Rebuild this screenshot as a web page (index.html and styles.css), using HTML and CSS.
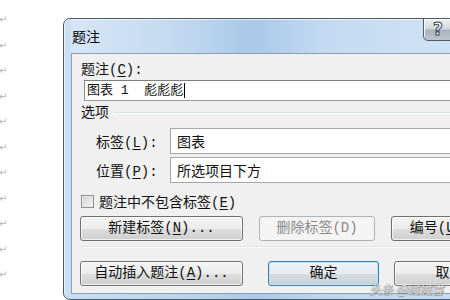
FILE: index.html
```
<!DOCTYPE html>
<html lang="zh-CN">
<head>
  <meta charset="UTF-8">
  <title>题注</title>
  <link rel="stylesheet" href="styles.css">
</head>
<body>
  <div class="page">
    <div class="marks">
      <span>↵</span><span>↵</span><span>↵</span><span>↵</span><span>↵</span><span>↵</span>
      <span>↵</span><span>↵</span><span>↵</span><span>↵</span><span>↵</span>
    </div>

    <div class="dialog">
      <div class="titlebar">
        <span class="title">题注</span>
      </div>
      <div class="help">?</div>

      <div class="client">
        <div class="label">题注(<u>C</u>):</div>
        <div class="caption-input">图表 1  彪彪彪<span class="caret"></span></div>

        <div class="group">
          <span>选项</span>
          <span class="group-line"></span>
        </div>

        <div class="field">
          <span class="field-label">标签(<u>L</u>):</span>
          <div class="combo">图表</div>
        </div>
        <div class="field">
          <span class="field-label">位置(<u>P</u>):</span>
          <div class="combo">所选项目下方</div>
        </div>

        <div class="check">
          <span class="box"></span>
          <span>题注中不包含标签(<u>E</u>)</span>
        </div>

        <div class="btn-row">
          <button class="btn btn-wide">新建标签(<u>N</u>)...</button>
          <button class="btn btn-mid" disabled>删除标签(D)</button>
          <button class="btn btn-mid">编号(<u>U</u>)...</button>
        </div>
        <div class="sep"></div>
        <div class="btn-row btn-row-bottom">
          <button class="btn btn-wide">自动插入题注(<u>A</u>)...</button>
          <button class="btn btn-small btn-default">确定</button>
          <button class="btn btn-small">取消</button>
        </div>
      </div>
    </div>
  </div>

  <div class="watermark">头条 @缄缄書</div>
</body>
</html>
```

FILE: styles.css
```
body {
  margin: 0;
  width: 450px;
  height: 300px;
  overflow: hidden;
  background-color: #fff;
  font-family: "Liberation Mono", "Noto Sans CJK SC", monospace;
  font-size: 14px;
  color: #111;
  position: relative;
}

.page {
  display: flex;
}

/* paragraph marks of the document behind the dialog */
.marks {
  width: 63px;
  flex-shrink: 0;
  padding-top: 12px;
  display: flex;
  flex-direction: column;
}

.marks span {
  height: 25.5px;
  line-height: 16px;
  font-family: "DejaVu Sans", sans-serif;
  font-size: 10px;
  color: #b5b5b5;
  margin-left: -1px;
}

.dialog {
  position: relative;
  margin-top: 18px;
  width: 430px;
  height: 282px;
  box-sizing: border-box;
  border: 1px solid #4b5866;
  border-radius: 7px 7px 0 7px;
  padding: 0 7px 5px 7px;
  background: linear-gradient(to right, #c9dff3 0%, #b9d4ee 30%, #a9c8e8 45%, #bdd7f0 60%, #c8def3 100%);
  box-shadow: inset 1px 1px 0 rgba(255, 255, 255, 0.6);
}

.titlebar {
  height: 34px;
  display: flex;
  align-items: center;
  background: linear-gradient(to right, rgba(255, 255, 255, 0.25), rgba(255, 255, 255, 0) 40%, rgba(255, 255, 255, 0.15) 80%);
}

.title {
  font-family: "Noto Sans CJK SC", sans-serif;
  font-size: 14px;
  color: #000;
  margin-left: 1px;
}

.help {
  position: absolute;
  left: 359px;
  top: -1px;
  width: 30px;
  height: 23px;
  box-sizing: border-box;
  border: 1px solid #4d5a68;
  border-radius: 0 0 0 5px;
  background: linear-gradient(#eef1f4 0%, #d3d9df 45%, #aab3bd 55%, #bcc4cc 100%);
  box-shadow: inset 1px 1px 0 rgba(255, 255, 255, 0.8);
  text-align: center;
  font-family: "DejaVu Sans", sans-serif;
  font-weight: bold;
  font-size: 17px;
  line-height: 21px;
  color: #fff;
  -webkit-text-stroke: 1px #3e4650;
}

.client {
  height: 241px;
  box-sizing: border-box;
  border: 1px solid #8a9fb4;
  background-color: #f0f0f0;
  padding-left: 9px;
}

u {
  text-decoration: underline;
  text-underline-offset: 2px;
}

.label {
  margin-top: 7px;
  line-height: 18px;
}

.caption-input {
  margin-top: 1px;
  margin-left: 3px;
  height: 21px;
  box-sizing: border-box;
  border: 1px solid;
  border-color: #7f7f7f #b5b5b5 #9a9a9a #8a8a8a;
  background-color: #fff;
  font-size: 13px;
  line-height: 19px;
  padding-left: 2px;
  white-space: pre;
  display: flex;
  align-items: center;
}

.caret {
  display: inline-block;
  width: 1px;
  height: 15px;
  background-color: #000;
  margin-left: 1px;
}

.group {
  margin-top: 3px;
  display: flex;
  align-items: center;
  line-height: 18px;
}

.group-line {
  flex: 1;
  margin-left: 5px;
  border-top: 1px solid #d5dfe5;
  border-bottom: 1px solid #fff;
}

.field {
  margin-top: 6px;
  display: flex;
  align-items: center;
}

.field + .field {
  margin-top: 3px;
}

.field-label {
  width: 74px;
  padding-left: 15px;
}

.combo {
  flex: 1;
  height: 26px;
  box-sizing: border-box;
  border: 1px solid #a7a7a7;
  background-color: #fff;
  padding-left: 6px;
  line-height: 24px;
  font-family: "Noto Sans CJK SC", sans-serif;
}

.check {
  margin-top: 9px;
  height: 18px;
  display: flex;
  align-items: center;
}

.box {
  width: 13px;
  height: 13px;
  box-sizing: border-box;
  border: 1px solid #8e8f8f;
  background: linear-gradient(135deg, #d2d2d2, #f4f4f4);
  box-shadow: inset 0 0 0 1px #e8e8e8;
  margin-right: 5px;
}

.btn-row {
  margin-top: 6px;
  margin-left: -1px;
  display: flex;
  gap: 16px;
}

.btn-row-bottom {
  margin-top: 13px;
  gap: 15px;
}

.btn {
  height: 25px;
  flex-shrink: 0;
  box-sizing: border-box;
  border: 1px solid #707070;
  border-radius: 3px;
  background: linear-gradient(#f4f4f4 0%, #ececec 50%, #dedede 50%, #cfcfcf 100%);
  box-shadow: inset 0 0 0 1px rgba(255, 255, 255, 0.7);
  font-family: "Liberation Mono", "Noto Sans CJK SC", monospace;
  font-size: 14px;
  color: #111;
  padding: 0;
  line-height: 23px;
}

.btn-wide {
  width: 163px;
}

.btn-mid {
  width: 116px;
}

.btn-small {
  width: 111px;
}

.btn-row-bottom .btn-default {
  margin-left: 10px;
  border-color: #3c7fb1;
  background: linear-gradient(#eef3f7 0%, #e6ecf1 50%, #d6dee5 50%, #c8d1d9 100%);
  box-shadow: inset 0 0 0 1px #bfe2f6;
}

.btn:disabled {
  border-color: #adb2b5;
  background: #f4f4f4;
  box-shadow: none;
  color: #8a8a8a;
}

.sep {
  margin-top: 5px;
  margin-right: 0;
  border-top: 1px solid #e2e2e2;
  border-bottom: 1px solid #fafafa;
}

.watermark {
  position: absolute;
  left: 369px;
  top: 281px;
  font-family: "Noto Sans CJK SC", sans-serif;
  font-style: italic;
  font-size: 12px;
  line-height: 16px;
  color: rgba(255, 255, 255, 0.9);
  text-shadow: 0 0 1px #444, 1px 1px 1px rgba(0, 0, 0, 0.35);
}
```
